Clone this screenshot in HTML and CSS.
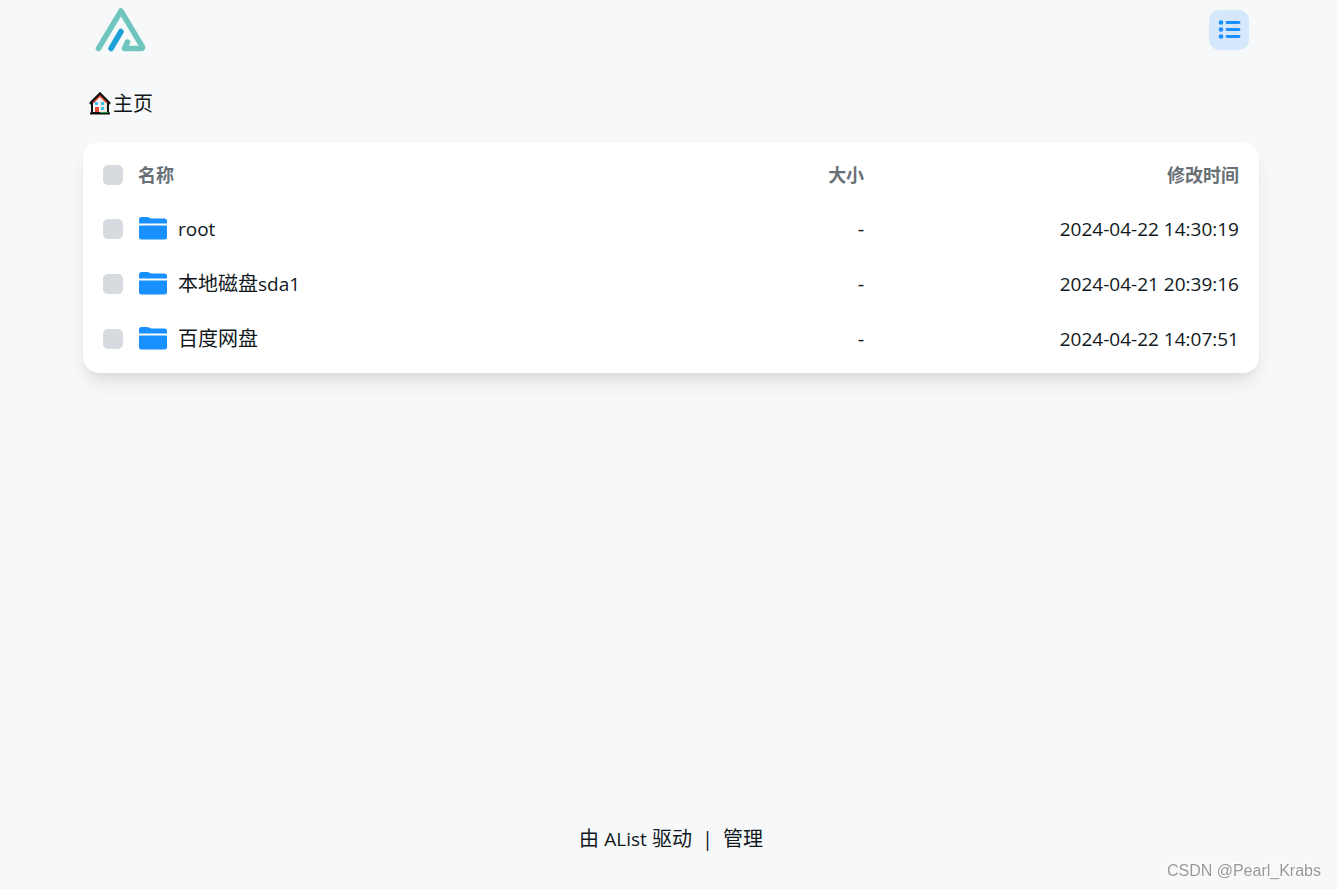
FILE: index.html
```html
<!DOCTYPE html>
<html lang="zh-CN">
<head>
    <meta charset="UTF-8">
    <meta name="viewport" content="width=device-width, initial-scale=1.0">
    <title>主页 | AList</title>
    <link rel="stylesheet" href="styles.css">
</head>
<body>
    <header class="header">
        <a href="#" class="logo" aria-label="AList">
            <svg width="54" height="46" viewBox="0 0 54 46" fill="none" stroke-width="5.500" stroke-linecap="round" stroke-linejoin="round">
                <path d="M5.500 41.500L28 4L49.500 40Q50 41.500 48 41.500H31.500L34.500 35" stroke="#70c6be"/>
                <path d="M18 41.500L28 24.500" stroke="#1ba0d8"/>
            </svg>
        </a>
        <button type="button" class="layout-btn" aria-label="列表">
            <svg width="24" height="24" viewBox="0 0 24 24" fill="#1890ff" stroke="#1890ff" stroke-width="2.900" stroke-linecap="round">
                <path d="M10 4.500H22M10 11.500H22M10 18.500H22"/>
                <g stroke="none">
                    <circle cx="4" cy="4.500" r="2.300"/>
                    <circle cx="4" cy="11.500" r="2.300"/>
                    <circle cx="4" cy="18.500" r="2.300"/>
                </g>
            </svg>
        </button>
    </header>

    <nav class="nav">
        <a href="#">
            <svg width="22" height="24" viewBox="0 0 22 24">
                <path d="M3 10L11 2L19 10V21H3Z" fill="#fff" stroke="#111" stroke-width="2"/>
                <path d="M11 21V5L18 12V21Z" fill="#ece6e0"/>
                <path d="M2 11L11 2L20 11" fill="none" stroke="#111" stroke-width="3" stroke-linecap="round"/>
                <path d="M4 11L11 4L18 11" fill="none" stroke="#e8472f" stroke-width="1.500"/>
                <path d="M6 10h3v3H6zM12 10h3v3h-3zM12 15h3v3h-3z" fill="#35c5f4"/>
                <path d="M6 15h4v5H6z" fill="#ef4a35"/>
                <path d="M1 21.500H21" stroke="#111" stroke-width="2"/>
                <path d="M12 20.500H19" stroke="#16a04a" stroke-width="1"/>
            </svg>
            <span>主页</span>
        </a>
    </nav>

    <main class="card">
        <table class="list">
            <thead>
                <tr>
                    <th class="check"><input type="checkbox" aria-label="全选"></th>
                    <th class="name">名称</th>
                    <th class="size">大小</th>
                    <th class="time">修改时间</th>
                </tr>
            </thead>
            <tbody>
                <tr>
                    <td class="check"><input type="checkbox" aria-label="root"></td>
                    <td class="name">
                        <a href="#">
                            <svg class="folder" width="30" height="24" viewBox="0 0 30 24" fill="#1890ff">
                                <path d="M1 6.500V2.500Q1 0 3.500 0H9Q10.500 0 12 1Q13 1.500 14.500 1.500H26.500Q29 1.500 29 4V6.500ZM1 8.500H29V20Q29 22.500 26.500 22.500H3.500Q1 22.500 1 20Z"/>
                            </svg>
                            <span class="latin">root</span>
                        </a>
                    </td>
                    <td class="size">-</td>
                    <td class="time">2024-04-22 14:30:19</td>
                </tr>
                <tr>
                    <td class="check"><input type="checkbox" aria-label="本地磁盘sda1"></td>
                    <td class="name">
                        <a href="#">
                            <svg class="folder" width="30" height="24" viewBox="0 0 30 24" fill="#1890ff">
                                <path d="M1 6.500V2.500Q1 0 3.500 0H9Q10.500 0 12 1Q13 1.500 14.500 1.500H26.500Q29 1.500 29 4V6.500ZM1 8.500H29V20Q29 22.500 26.500 22.500H3.500Q1 22.500 1 20Z"/>
                            </svg>
                            <span>本地磁盘<span class="latin">sda1</span></span>
                        </a>
                    </td>
                    <td class="size">-</td>
                    <td class="time">2024-04-21 20:39:16</td>
                </tr>
                <tr>
                    <td class="check"><input type="checkbox" aria-label="百度网盘"></td>
                    <td class="name">
                        <a href="#">
                            <svg class="folder" width="30" height="24" viewBox="0 0 30 24" fill="#1890ff">
                                <path d="M1 6.500V2.500Q1 0 3.500 0H9Q10.500 0 12 1Q13 1.500 14.500 1.500H26.500Q29 1.500 29 4V6.500ZM1 8.500H29V20Q29 22.500 26.500 22.500H3.500Q1 22.500 1 20Z"/>
                            </svg>
                            <span>百度网盘</span>
                        </a>
                    </td>
                    <td class="size">-</td>
                    <td class="time">2024-04-22 14:07:51</td>
                </tr>
            </tbody>
        </table>
    </main>

    <footer class="footer">
        <a href="#">由 <span class="latin">AList</span> 驱动</a>
        <span>|</span>
        <a href="#">管理</a>
    </footer>

    <div class="watermark">CSDN @Pearl_Krabs</div>
</body>
</html>
```
FILE: styles.css
```css
* {
    box-sizing: border-box;
}
body {
    margin: 0;
    padding-left: 5px;
    min-height: 100vh;
    display: flex;
    flex-direction: column;
    align-items: center;
    background-color: #f7f8fa;
    color: #11181c;
    font-family: "Open Sans", "Noto Sans CJK SC", sans-serif;
    font-size: 20px;
    line-height: 30px;
}
a {
    color: inherit;
    text-decoration: none;
}
svg {
    display: block;
    flex: none;
}
.latin {
    font-size: 19px;
}

/* header */
.header {
    width: 100%;
    max-width: 1176px;
    height: 60px;
    padding: 0 10px;
    display: flex;
    align-items: center;
    justify-content: space-between;
}
.layout-btn {
    width: 40px;
    height: 40px;
    padding: 0;
    display: flex;
    align-items: center;
    justify-content: center;
    background-color: #d5e8fb;
    border: none;
    border-radius: 10px;
    cursor: pointer;
}

/* breadcrumb */
.nav {
    width: 100%;
    max-width: 1176px;
    padding: 29px 6px 23px;
    display: flex;
}
.nav a {
    display: flex;
    align-items: center;
    gap: 2px;
}

/* file list */
.card {
    width: 100%;
    max-width: 1176px;
    padding: 7px 20px;
    background-color: #fff;
    border-radius: 16px;
    box-shadow: 0 12px 20px -4px rgba(0, 0, 0, 0.1), 0 5px 8px -3px rgba(0, 0, 0, 0.05);
}
.list {
    width: 100%;
    table-layout: fixed;
    border-collapse: collapse;
}
.list th,
.list td {
    height: 55px;
    padding: 0;
    text-align: right;
}
.list th {
    height: 52px;
    color: #687076;
    font-size: 18px;
    font-weight: 700;
}
.list .check {
    width: 35px;
    text-align: left;
}
.list .name {
    text-align: left;
}
.list .size {
    width: 17%;
}
.list .time {
    width: 33%;
}
.list td.time {
    font-size: 19px;
}
.name a {
    display: flex;
    align-items: center;
    gap: 10px;
}
input[type="checkbox"] {
    display: block;
    appearance: none;
    width: 20px;
    height: 20px;
    margin: 0;
    background-color: #d7dbdf;
    border-radius: 5px;
    cursor: pointer;
}
input[type="checkbox"]:checked {
    background-color: #1890ff;
}

.footer {
    margin-top: auto;
    padding: 20px 0 35px;
    display: flex;
    gap: 10px;
}

.watermark {
    position: fixed;
    right: 16px;
    bottom: 3px;
    color: #999;
    font-family: "Liberation Sans", Arial, sans-serif;
    font-size: 16px;
    text-shadow: -1px -1px 0 #fff;
}
```
